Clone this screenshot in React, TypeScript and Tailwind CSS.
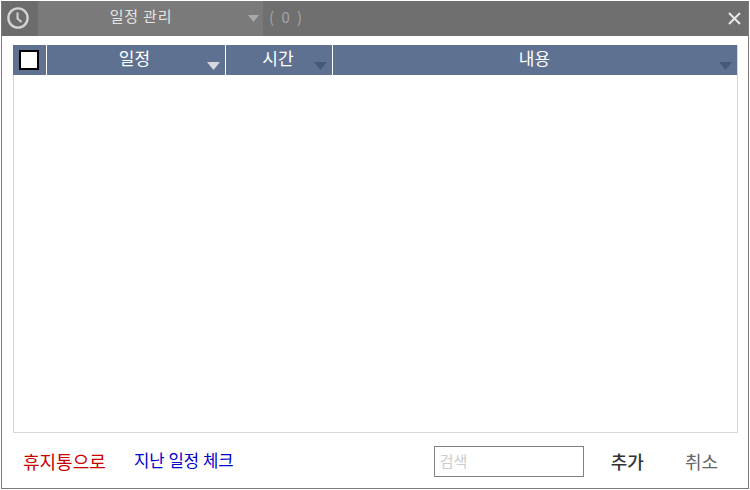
import React from "react";

const font = { fontFamily: '"Noto Sans CJK KR", "Liberation Sans", sans-serif' };

function Caret({ className }: { className: string }) {
  return (
    <svg width="13" height="8" viewBox="0 0 13 8" className={className}>
      <path d="M0 0H13L6.5 8Z" fill="currentColor" />
    </svg>
  );
}

function Head({ label, width, caret, grow, shift }: { label: string; width?: string; caret: string; grow?: boolean; shift: string }) {
  return (
    <div className={`${width ?? ""} ${grow ? "flex-1" : ""} ${shift} relative flex justify-center border-r border-white last:border-r-0`}>
      <span className="text-[17px] leading-[25px] text-white">{label}</span>
      <Caret className={`absolute right-[5px] bottom-[5px] ${caret}`} />
    </div>
  );
}

export default function App() {
  return (
    <div className="w-[750px] h-[490px] bg-white pt-px pl-px overflow-hidden" style={font}>
      <div className="w-[748px] h-[488px] flex flex-col bg-white border-l border-r border-b border-[#7b7b76]">
        <div className="h-[35px] shrink-0 flex items-stretch bg-[#6f6f6f] text-[#e4e4e4]">
          <div className="w-[36px] flex items-center justify-center bg-[#6c6c6c] pr-[5px] pb-[1px]">
            <svg width="22" height="22" viewBox="0 0 22 22" fill="none" stroke="#d2d2d2" strokeWidth="2.4">
              <circle cx="11" cy="11" r="9.6" />
              <path d="M10.5 5.5V11.5L14.5 15" strokeWidth="2" />
            </svg>
          </div>
          <div className="w-[225px] relative flex items-center justify-center bg-[#7a7a7a] pr-[19px] pb-[4px]">
            <span className="text-[15px] tracking-[0.8px]">일정 관리</span>
            <Caret className="absolute right-[4px] top-[14px] text-[#a9a9a9] w-[11px] h-[7px]" />
          </div>
          <div className="flex-1 flex items-center pl-[6px] pb-[2px] text-[#a5a5a5] text-[15px] tracking-[2px]">( 0 )</div>
          <div className="w-[28px] flex items-center justify-center">
            <svg width="13" height="13" viewBox="0 0 13 13" stroke="#e8e8e8" strokeWidth="2">
              <path d="M1 1L12 12M12 1L1 12" />
            </svg>
          </div>
        </div>
        <div className="mt-[9px] ml-[11px] w-[725px] h-[388px] border-r border-b border-l border-[#d6d6d6] flex flex-col">
          <div className="h-[30px] flex bg-[#5f7191] -ml-px w-[724px]">
            <div className="w-[34px] flex items-center justify-center border-r border-white pr-[1px]">
              <div className="w-[20px] h-[20px] bg-white border-2 border-black" />
            </div>
            <Head label="일정" width="w-[179px]" caret="text-[#d6d9df]" shift="pr-[3px]" />
            <Head label="시간" width="w-[107px]" caret="text-[#46597a]" shift="pr-[2px]" />
            <Head label="내용" grow caret="text-[#46597a]" shift="pr-[1px]" />
          </div>
        </div>
        <div className="flex-1 flex items-center pl-[21px] pr-[30px] pt-[1px]">
          <span className="text-[18px] text-[#c80000] w-[111px]">휴지통으로</span>
          <span className="text-[16.7px] text-[#0000c8]">지난 일정 체크</span>
          <div className="ml-auto w-[150px] h-[31px] border border-[#808080] flex items-center pl-[5px] text-[15px] text-[#cccccc]">검색</div>
          <span className="ml-[27px] text-[18px] font-medium text-[#333333]">추가</span>
          <span className="ml-[41px] text-[18px] text-[#666666]">취소</span>
        </div>
      </div>
    </div>
  );
}
